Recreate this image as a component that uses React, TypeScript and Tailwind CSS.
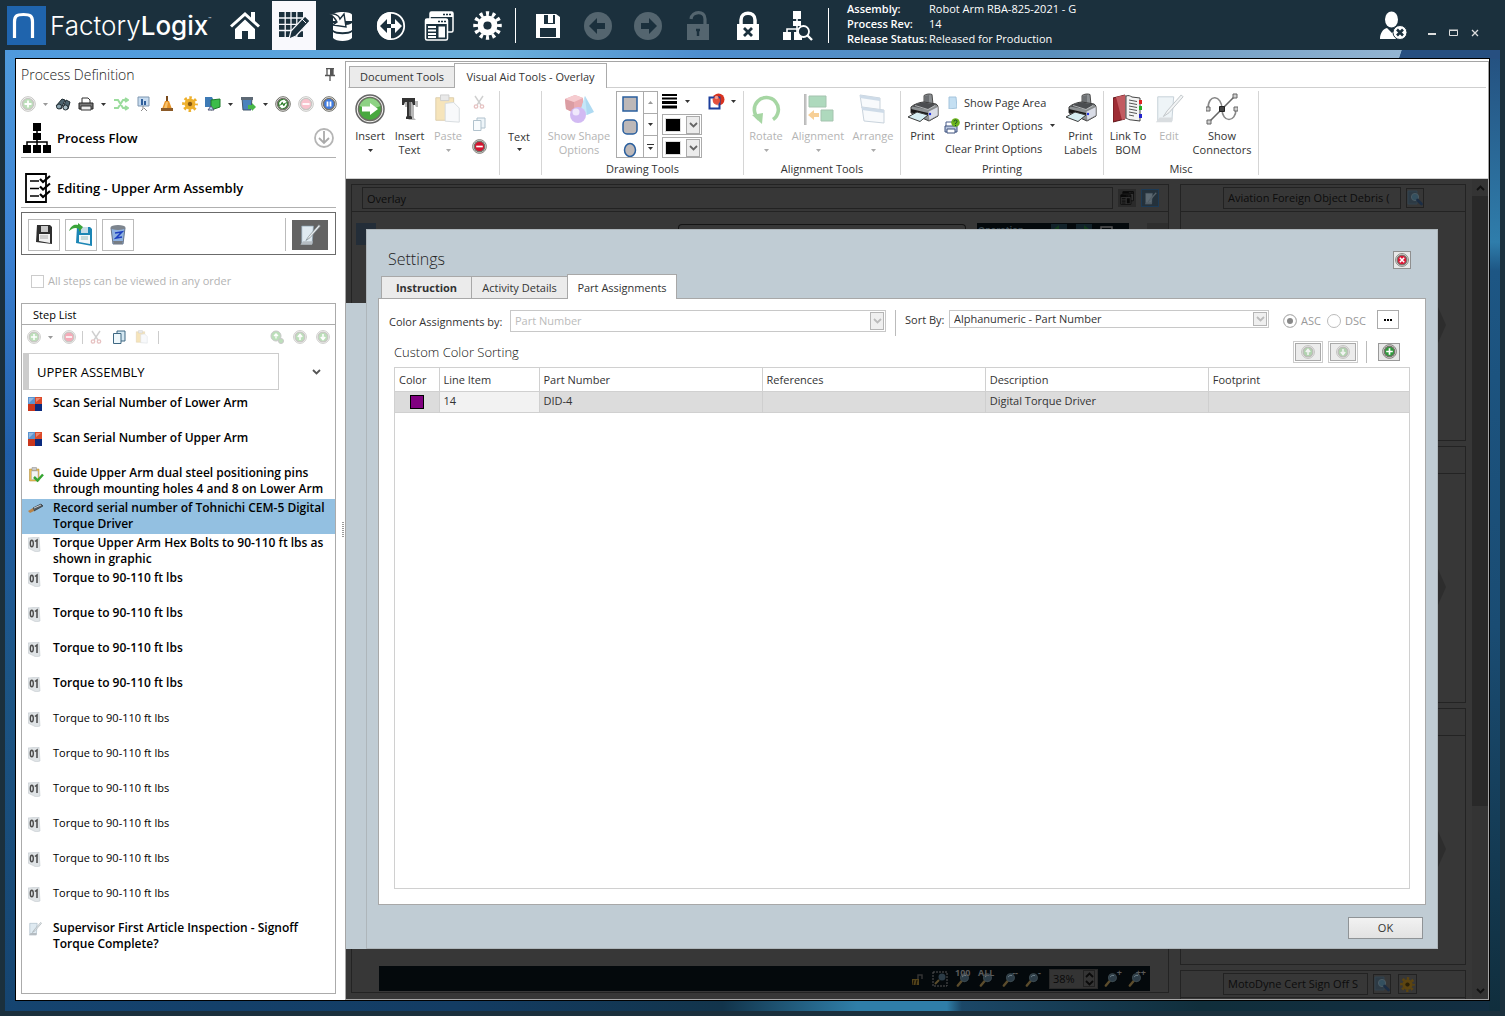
import React, { type ReactNode } from "react";

type P = { children?: ReactNode; className?: string };

/* ---------- shared little drawings ---------- */

function Svg({ s = 16, w, h, vb, children, className = "" }: { s?: number; w?: number; h?: number; vb?: string } & P) {
  return (
    <svg width={w ?? s} height={h ?? s} viewBox={vb ?? `0 0 ${w ?? s} ${h ?? s}`} className={"block shrink-0 " + className} aria-hidden="true">
      {children}
    </svg>
  );
}

const Caret = ({ className = "text-[#333]" }: P) => (
  <Svg w={5} h={3} className={className}>
    <path d="M0 0h5L2.5 3z" fill="currentColor" />
  </Svg>
);

const Chevron = ({ className = "" }: P) => (
  <Svg w={9} h={6} className={className}>
    <path d="M1 1l3.500 3.500L8 1" fill="none" stroke="currentColor" strokeWidth="1.800" />
  </Svg>
);

const signs: Record<string, string> = {
  plus: "M8 4.500v7M4.500 8h7",
  minus: "M4.500 8h7",
  up: "M8 11.500V5.500M5.500 8L8 5.200 10.500 8",
  down: "M8 4.500v6M5.500 8L8 10.800 10.500 8",
  pause: "M6.500 5.500v5M9.500 5.500v5",
  cross: "M5.500 5.500l5 5M10.500 5.500l-5 5",
  refresh: "M5 8.500A3 3 0 0 1 9.500 5.400M11 7.500A3 3 0 0 1 6.500 10.600M8.300 4l2 1.700-2.300 1.200M7.700 12l-2-1.700 2.300-1.200",
};

function Disc({ sign, fill, dim, s = 16 }: { sign: string; fill: string; dim?: boolean; s?: number }) {
  return (
    <Svg s={s} vb="0 0 16 16" className={dim ? "opacity-40" : ""}>
      <circle cx="8" cy="8" r="7.300" fill="#fff" stroke="#6d6d66" strokeWidth="1" />
      <circle cx="8" cy="8" r="5.600" fill={fill} stroke="#77736c" strokeWidth="1.400" />
      <path d={signs[sign]} fill="none" stroke="#fff" strokeWidth="1.800" />
    </Svg>
  );
}

const Scissors = () => (
  <Svg s={14} className="opacity-40">
    <path d="M3 1l6 9M11 1L5 10" stroke="#8a8a8a" strokeWidth="1.400" fill="none" />
    <circle cx="4" cy="11.500" r="1.700" fill="none" stroke="#c46a6a" strokeWidth="1.300" />
    <circle cx="10" cy="11.500" r="1.700" fill="none" stroke="#c46a6a" strokeWidth="1.300" />
  </Svg>
);

const Copy = ({ className = "" }: P) => (
  <Svg s={14} className={className}>
    <path d="M5 1h8v10H5z" fill="#d5e8f2" stroke="#3e6883" />
    <path d="M1.500 3.500h7.500v10H1.500z" fill="#eef7fb" stroke="#3e6883" />
  </Svg>
);

const Clipboard = ({ s = 14, check }: { s?: number; check?: boolean }) => (
  <Svg s={s} vb="0 0 32 32" className={check ? "" : "opacity-40"}>
    <path d="M3 4h19v24H3z" fill="#e9bd55" stroke="#a98430" />
    <path d="M8 1h9v6H8z" fill="#c9c9c9" stroke="#888" />
    {check ? <path d="M7 8h13v17H7z" fill="#f2f4f4" stroke="#aaa" /> : <path d="M13 10l9-1 6 6v15l-15-1z" fill="#eef2f6" stroke="#9aa6b0" />}
    {check && <path d="M12 20l7 7L30 15" fill="none" stroke="#35a531" strokeWidth="5" />}
  </Svg>
);

const Printer = ({ s = 32 }: { s?: number }) => (
  <Svg s={s} vb="0 0 32 32">
    <path d="M17 2.500c2-1.500 6-2 8-1l1 10-9 1z" fill="#8c9093" stroke="#4c4c4c" />
    <path d="M18 3l4-1v9l-4 .5z" fill="#6d7073" />
    <path d="M4 14c3-3 10-5 13-5l12 2c2 1 2 3 2 5v7l-9 5-18-8z" fill="#8d9193" stroke="#3b3b3b" />
    <path d="M5 13.500c3-2 9-4 12-4l12 2-8 5z" fill="#4b4d50" />
    <path d="M8 12.500l13 4 7-4" fill="none" stroke="#c9cccd" strokeWidth=".8" />
    <path d="M21 18.500l10-5v9l-9 5z" fill="#d9dce6" stroke="#777" strokeWidth=".6" />
    <path d="M4 16l17 4v3L4 19.500z" fill="#191919" />
    <path d="M1 24l9-5 11 3-8 6.500z" fill="#d6eef3" stroke="#3b3b3b" />
    <circle cx="23" cy="21" r="1.200" fill="#2233dd" />
  </Svg>
);

const NotePencil = ({ s = 32, className = "" }: { s?: number } & P) => (
  <Svg s={s} vb="0 0 32 32" className={className}>
    <path d="M4 3h17l-2 26H4z" fill="#dfeaf1" stroke="#8ba1b0" />
    <path d="M2 30l4-5h14l-1 5z" fill="#b5bcc2" />
    <path d="M29 1l2 2-15 17-6 4 4-6z" fill="#e8ecee" stroke="#7f8a90" />
  </Svg>
);

const Mag = ({ s = 16 }: { s?: number }) => (
  <Svg s={s} vb="0 0 16 16">
    <path d="M6.500 9L2 14.500" stroke="#5b4c2c" strokeWidth="2.600" strokeLinecap="round" />
    <circle cx="9" cy="6" r="4.200" fill="#2c3c47" stroke="#38464d" strokeWidth="1.200" />
    <path d="M6.800 5.500a2.500 2 0 0 1 4-1.500" stroke="#71848e" fill="none" />
  </Svg>
);

const Find = () => (
  <Svg s={16}>
    <path d="M1 1h9v13H1z" fill="#2d3a44" stroke="#33424e" />
    <circle cx="8" cy="7" r="3.600" fill="#34505f" stroke="#4b5a62" />
    <path d="M10.500 10l4 4" stroke="#1b2d44" strokeWidth="2.600" strokeLinecap="round" />
  </Svg>
);

const Gear = ({ s = 16, fill = "#eeb02c", hole = "#fff", teeth = 8 }: { s?: number; fill?: string; hole?: string; teeth?: number }) => (
  <Svg s={s} vb="0 0 32 32">
    <circle cx="16" cy="16" r="7.500" fill="none" stroke={fill} strokeWidth="7" />
    <circle cx="16" cy="16" r="13" fill="none" stroke={fill} strokeWidth="5.500" pathLength={teeth * 2} strokeDasharray="1 1" strokeDashoffset=".5" />
    <circle cx="16" cy="16" r="4.500" fill={hole} />
  </Svg>
);

const Windows = ({ s = 30, fg = "#fff", bg = "#1b303d" }: { s?: number; fg?: string; bg?: string }) => (
  <Svg s={s} vb="0 0 30 30">
    <rect x="6" y="1" width="23" height="20" rx="1.500" fill={bg} stroke={fg} strokeWidth="1.500" />
    <path d="M6 1h23v5H6z" fill={fg} />
    <path d="M19 3.500h8" stroke={bg} strokeWidth="1.500" strokeDasharray="2 1" />
    <rect x="1.500" y="8" width="22" height="21" rx="1.500" fill={bg} stroke={fg} strokeWidth="1.500" />
    <path d="M1.500 8h22v5h-22z" fill={fg} />
    <path d="M14 10.500h8" stroke={bg} strokeWidth="1.500" strokeDasharray="2 1" />
    <path d="M4 16h8M4 19.500h8M4 23h8M4 26h8" stroke={fg} strokeWidth="1.800" />
    <rect x="14.500" y="15.500" width="6.500" height="11" fill={fg} />
  </Svg>
);

/* ---------- title bar ---------- */

function NavButton({ label, children, active }: { label: string; children: ReactNode; active?: boolean }) {
  return (
    <button aria-label={label} className={"flex w-11 items-center justify-center self-stretch " + (active ? "bg-[#f9f9fd]" : "")}>
      {children}
    </button>
  );
}

const ArrowDisc = ({ left }: { left?: boolean }) => (
  <Svg s={30}>
    <circle cx="15" cy="15" r="14" fill="#54656f" />
    <path d={left ? "M6 15l8-8v5h8v6h-8v5z" : "M24 15l-8-8v5H8v6h8v5z"} fill="#1b303d" />
  </Svg>
);

function TitleBar() {
  return (
    <header className="flex h-[50px] shrink-0 items-stretch bg-[#1b303d] pt-px text-white">
      <div className="ml-[7px] mr-[8px] flex w-[208px] items-center gap-[4px]">
        <Svg s={39}>
          <path d="M0 0h39v39H0z" fill="#1f64ad" />
          <path d="M7.500 32V16C7.500 10 9.500 8.500 16.500 8.500S25.500 10 25.500 16V32" fill="none" stroke="#fff" strokeWidth="3.200" />
        </Svg>
        <div className="flex items-start whitespace-nowrap font-['Inter',sans-serif] text-[26px] font-light leading-[30px]">
          Factory<span className="font-medium">Logix</span>
          <span className="text-[5px] leading-[16px]">™</span>
        </div>
      </div>
      <nav className="flex w-[287px] shrink-0 justify-between">
        <NavButton label="Home">
          <Svg s={30}>
            <path d="M15 1L0 14.500l2 2L15 5l13 11.500 2-2-5-4.500V1h-4v5.500z" fill="#fff" />
            <path d="M5 18L15 8.500 25 18v10h-7v-8h-6v8H5z" fill="#fff" />
          </Svg>
        </NavButton>
        <NavButton label="Definition" active>
          <Svg s={30}>
            <path d="M0 1h24v25H0z" fill="#1b303d" />
            <path d="M6.200 0v26M12 0v26M17.800 0v26M0 7h25M0 13.300h25M0 19.500h25" stroke="#f9f9fd" strokeWidth="1.300" />
            <path d="M26 5l5 5-14 15-7 3 2-8z" fill="#1b303d" stroke="#f9f9fd" strokeWidth="1.200" />
            <path d="M23 8l4 4" stroke="#f9f9fd" />
          </Svg>
        </NavButton>
        <NavButton label="Data">
          <Svg w={26} h={30}>
            <path d="M4 4c0-4 19-4 19 0v6H4z" fill="#fff" />
            <path d="M4 12c3 3 16 3 19 0v7c-3 3-16 3-19 0zM4 21c3 3 16 3 19 0v6c-3 4-16 4-19 0z" fill="#fff" />
            <path d="M0 3c5-1 10 1 11 5l4-5 2 13-13-2 4-3C6 7 4 5 0 3z" fill="#fff" stroke="#1b303d" strokeWidth="1.400" />
          </Svg>
        </NavButton>
        <NavButton label="Transfer">
          <Svg s={30}>
            <circle cx="15" cy="15" r="13.200" fill="none" stroke="#fff" strokeWidth="1.800" />
            <path d="M15 1a14 14 0 0 0 0 28z" fill="#fff" />
            <path d="M4 15l7-7v5h4v4h-4v5z" fill="#1b303d" />
            <path d="M26 15l-7-7v5h-4v4h4v5z" fill="#fff" />
          </Svg>
        </NavButton>
        <NavButton label="Windows">
          <Windows />
        </NavButton>
        <NavButton label="Settings">
          <Gear s={29} fill="#fff" hole="#1b303d" teeth={12} />
        </NavButton>
      </nav>
      <div className="my-[7px] ml-[5px] mr-[6px] w-px bg-white" />
      <div className="flex gap-[6px] pl-[4px]">
        <NavButton label="Save">
          <Svg s={26}>
            <path d="M1 1h20l4 3v21H1z" fill="#fff" />
            <path d="M6 2h14v9H6z" fill="#1b303d" />
            <path d="M13 2h5v8h-5zM6 2h3v9H6z" fill="#fff" />
            <path d="M5 15h16v9H5z" fill="#1b303d" />
          </Svg>
        </NavButton>
        <NavButton label="Back">
          <ArrowDisc left />
        </NavButton>
        <NavButton label="Forward">
          <ArrowDisc />
        </NavButton>
        <NavButton label="Unlock">
          <Svg w={24} h={30}>
            <path d="M5 8c1-8 14-9 14 0v6" fill="none" stroke="#54656f" strokeWidth="3.200" />
            <path d="M1 13h22v16H1z" fill="#54656f" />
            <path d="M12 18v7M10 19h4" stroke="#1b303d" strokeWidth="2.400" />
          </Svg>
        </NavButton>
        <NavButton label="Lock">
          <Svg w={24} h={30}>
            <path d="M5 14V9c0-9 14-9 14 0v5" fill="none" stroke="#fff" strokeWidth="3.500" />
            <path d="M1 13h22v16H1z" fill="#fff" />
            <path d="M8 17l8 8M16 17l-8 8" stroke="#1b303d" strokeWidth="2.800" />
          </Svg>
        </NavButton>
        <NavButton label="Find in hierarchy">
          <Svg w={30} h={31}>
            <path d="M10 1h8v8h-8zM10 11h8v5h-8zM0 22h8v8H0zM11 22h8v8h-8z" fill="#fff" />
            <path d="M14 8v14M4 23v-4h14" stroke="#fff" strokeWidth="1.600" fill="none" />
            <circle cx="20.500" cy="21.500" r="5.500" fill="#1b303d" stroke="#fff" strokeWidth="1.800" />
            <path d="M24 25l5 5" stroke="#fff" strokeWidth="2.400" />
          </Svg>
        </NavButton>
      </div>
      <div className="mx-[8px] my-[7px] w-px bg-white" />
      <dl className="ml-[10px] grid grid-cols-[82px_auto] content-start text-[11px] leading-[15px]">
        <dt className="font-semibold">Assembly:</dt>
        <dd>Robot Arm RBA-825-2021 - G</dd>
        <dt className="font-semibold">Process Rev:</dt>
        <dd>14</dd>
        <dt className="whitespace-nowrap font-semibold">Release Status:</dt>
        <dd>Released for Production</dd>
      </dl>
      <div className="ml-auto flex items-center gap-[13px] pr-[26px]">
        <button aria-label="Log out" className="pr-[7px]">
          <Svg w={28} h={29}>
            <ellipse cx="11.500" cy="8.500" rx="6.500" ry="8" fill="#fff" />
            <path d="M0 28c0-6 3-10 7-11l5 5 4-5c4 1 6 5 6 11z" fill="#fff" />
            <circle cx="20" cy="21.500" r="7" fill="#fff" stroke="#1b303d" />
            <path d="M17 18.500l6 6M23 18.500l-6 6" stroke="#1b303d" strokeWidth="2.600" />
          </Svg>
        </button>
        <button aria-label="Minimize" className="pt-[24px]">
          <Svg w={8} h={9}>
            <path d="M0 0h8v2H0z" fill="#ddd" />
          </Svg>
        </button>
        <button aria-label="Maximize" className="pt-[14px]">
          <Svg w={9} h={7}>
            <path d="M.5 1.500h8v5h-8zM0 1h9" fill="none" stroke="#ddd" />
          </Svg>
        </button>
        <button aria-label="Close" className="pt-[14px]">
          <Svg s={8}>
            <path d="M1 1l6 6M7 1L1 7" stroke="#ddd" strokeWidth="1.300" />
          </Svg>
        </button>
      </div>
    </header>
  );
}

/* ---------- left panel ---------- */

const toolRow: ReactNode[] = [
  <Disc key="a" sign="plus" fill="#5ab055" dim />,
  <Caret key="b" className="text-[#999]" />,
  <Svg key="c">
    <path d="M1 10l6-7 3 1-4 9zM8 12l3-8 4 2-2 7z" fill="#4d6470" stroke="#1f2b31" />
    <circle cx="4" cy="10.500" r="2.500" fill="#8da5b1" stroke="#1f2b31" />
    <circle cx="10.500" cy="11.500" r="2.500" fill="#a9bcc5" stroke="#1f2b31" />
  </Svg>,
  <Svg key="d">
    <path d="M4 2h6l2 2v4H4z" fill="#fff" stroke="#333" />
    <path d="M1 7h14v6H1z" fill="#777" stroke="#222" />
    <path d="M3 10h10v4H3z" fill="#eee" stroke="#333" />
  </Svg>,
  <Caret key="e" />,
  <Svg key="f">
    <path d="M1 4h4l5 8h4M1 12h4l5-8h4M12 2l3 2-3 2M12 10l3 2-3 2" fill="none" stroke="#9bdc9d" strokeWidth="2" />
  </Svg>,
  <Svg key="g">
    <path d="M2 1h11v9H2z" fill="#c8dcf0" stroke="#7f97b0" />
    <path d="M5 3h2v6H5zM8 5h2v4H8z" fill="#31609c" />
    <path d="M7 10v3l-2 2M8 12l3 3" stroke="#888" fill="none" />
  </Svg>,
  <Svg key="h">
    <path d="M7 0h2v5H7z" fill="#7a4a1c" />
    <path d="M6 5h4l3 8H3z" fill="#e8952a" />
    <path d="M7 6h2l-1 6H5z" fill="#f7c26c" />
    <path d="M2 12h12v3H2z" fill="#8c5b28" />
  </Svg>,
  <Gear key="i" hole="#8a5b10" />,
  <Svg key="j">
    <path d="M0 1h7l1 2v8H0z" fill="#3d7ab5" />
    <path d="M6 4l9-1v8l-9 3z" fill="#3bbd4a" stroke="#1f7a2b" />
    <path d="M3 14l3-4 3 4z" fill="#b5d6ef" stroke="#557" />
  </Svg>,
  <Caret key="k" />,
  <Svg key="l">
    <path d="M2 2h10l-1 12H3z" fill="#4a82bd" stroke="#41566b" />
    <path d="M1 1h12v3H1z" fill="#5d6975" />
    <path d="M8 9h4V7l4 4-4 4v-2H8z" fill="#49b749" />
  </Svg>,
  <Caret key="m" />,
  <Disc key="n" sign="refresh" fill="#2e7f2b" />,
  <Disc key="o" sign="minus" fill="#ef6b84" dim />,
  <Disc key="p" sign="pause" fill="#3f7be0" />,
];

type Step = { text: string; bold?: boolean; icon: "scan" | "clip" | "tool" | "num" | "sign"; selected?: boolean };

const steps: Step[] = [
  { text: "Scan Serial Number of Lower Arm", bold: true, icon: "scan" },
  { text: "Scan Serial Number of Upper Arm", bold: true, icon: "scan" },
  { text: "Guide Upper Arm dual steel positioning pins through mounting holes 4 and 8 on Lower Arm", bold: true, icon: "clip" },
  { text: "Record serial number of Tohnichi CEM-5 Digital Torque Driver", bold: true, icon: "tool", selected: true },
  { text: "Torque Upper Arm Hex Bolts to 90-110 ft lbs as shown in graphic", bold: true, icon: "num" },
  ...Array.from({ length: 4 }, (): Step => ({ text: "Torque to 90-110 ft lbs", bold: true, icon: "num" })),
  ...Array.from({ length: 6 }, (): Step => ({ text: "Torque to 90-110 ft lbs", icon: "num" })),
  { text: "Supervisor First Article Inspection - Signoff Torque Complete?", bold: true, icon: "sign" },
];

function StepIcon({ kind }: { kind: Step["icon"] }) {
  if (kind === "scan")
    return (
      <Svg s={14}>
        <path d="M0 0h7v7H0z" fill="#5b93cf" />
        <path d="M7 0h7v7H7z" fill="#dc4a2a" />
        <path d="M0 7h7v7H0z" fill="#c9361d" />
        <path d="M7 7h7v7H7z" fill="#0b2a7e" />
        <path d="M1 1l5 0-5 5zM8 1h5L8 5z" fill="#fff" opacity=".35" />
      </Svg>
    );
  if (kind === "clip") return <Clipboard s={16} check />;
  if (kind === "tool")
    return (
      <Svg s={15}>
        <path d="M5 6l8-4 2 2-9 5z" fill="#555b60" stroke="#2f3336" strokeWidth=".7" />
        <path d="M0 9l5-3 1 3-4 2z" fill="#b98448" />
        <path d="M6 6l7-3" stroke="#c8cdd0" />
      </Svg>
    );
  if (kind === "sign") return <NotePencil s={14} />;
  return (
    <Svg w={13} h={15}>
      <path d="M0 1l11-1 1 14-4 1L0 11z" fill="#dfe3e6" stroke="#c3c9ce" strokeWidth=".6" />
      <ellipse cx="3.800" cy="6.500" rx="1.500" ry="3.200" fill="none" stroke="#4a4a4a" strokeWidth="1.400" />
      <path d="M7 4.500L9 3v8" fill="none" stroke="#4a4a4a" strokeWidth="1.500" />
    </Svg>
  );
}

function ProcessPanel() {
  return (
    <aside className="flex w-[320px] shrink-0 flex-col pl-[5px] text-black">
      <div className="flex h-[32px] items-center justify-between pb-[2px]">
        <h1 className="text-[14px] font-light text-[#222]">Process Definition</h1>
        <button aria-label="Pin panel">
          <Svg w={12} h={13}>
            <path d="M2 .5h8M3 1v6M9 1v6M1 7.500h10M6 8v5" fill="none" stroke="#555" strokeWidth="1.300" />
            <path d="M6 1h3v6H6z" fill="#555" />
          </Svg>
        </button>
      </div>
      <div className="-ml-px flex h-[26px] items-center gap-[7px]">{toolRow}</div>
      <div className="flex h-[41px] items-center gap-[6px] border-b border-[#b0b0b0] pl-[2px] pr-[2px] pt-[2px]">
        <Svg w={28} h={30}>
          <path d="M10 0h8v8h-8zM10 10h8v7h-8zM0 22h8v8H0zM10 22h8v8h-8zM20 22h8v8h-8z" />
          <path d="M14 8v14M4 22v-3h20v3" fill="none" stroke="#000" strokeWidth="1.500" />
        </Svg>
        <h2 className="flex-1 pt-px text-[13px] font-semibold">Process Flow</h2>
        <button aria-label="Expand process flow">
          <Svg s={20}>
            <circle cx="10" cy="10" r="9" fill="none" stroke="#b5b5b5" strokeWidth="1.800" />
            <path d="M10 3v12M5 10l5 5 5-5" fill="none" stroke="#aaa" strokeWidth="1.800" />
          </Svg>
        </button>
      </div>
      <div className="flex h-[50px] items-center gap-[5px] border-b border-[#b0b0b0] pl-[4px] pt-[11px]">
        <Svg w={27} h={30}>
          <path d="M1 1h20v28H1z" fill="#fff" stroke="#000" strokeWidth="1.800" />
          <path d="M5 8h9M5 15.500h9M5 23h9" stroke="#000" strokeWidth="1.500" />
          <path d="M15 6l3 3 7-6M15 13.500l3 3 7-6M15 21l3 3 7-6" fill="none" stroke="#000" strokeWidth="2.200" />
        </Svg>
        <h2 className="pt-px text-[13px] font-semibold">Editing - Upper Arm Assembly</h2>
      </div>
      <div className="mt-[4px] flex h-[43px] shrink-0 items-center gap-[5px] border border-[#6b6b6b] pl-[6px] pr-[7px] pt-[2px]">
        <button aria-label="Save step" className="flex h-8 w-8 items-center justify-center border border-[#bbb]">
          <Svg s={22}>
            <path d="M4 1h13l2 2v17L3 18z" fill="#2e2e2e" />
            <path d="M8 2h7v6H8z" fill="#c8c8c8" />
            <path d="M6 10h11v9L6 17z" fill="#f1f1f1" />
            <path d="M7 12h8M7 14h8" stroke="#aaa" />
          </Svg>
        </button>
        <button aria-label="Save and return" className="flex h-8 w-8 items-center justify-center border border-[#bbb]">
          <Svg s={24}>
            <path d="M8 4h13l2 2v17L7 20z" fill="#1c86b5" />
            <path d="M12 4h7v6h-7z" fill="#c7dce6" />
            <path d="M10 12h11v9l-11-2z" fill="#f3f8fa" />
            <path d="M12 14h7M12 16h7" stroke="#9bb" />
            <path d="M0 8c2-6 6-7 9-6V0l5 4-4 5V6C6 4 4 5 0 8z" fill="#3aa53a" />
          </Svg>
        </button>
        <button aria-label="Delete step" className="flex h-8 w-8 items-center justify-center border border-[#bbb]">
          <Svg s={22}>
            <path d="M4 4h14l-2 16H6z" fill="#8fb2e0" stroke="#66758a" />
            <ellipse cx="11" cy="3.500" rx="7.500" ry="2.500" fill="#7d858e" />
            <path d="M8 9l7-1-6 6 6-1" fill="none" stroke="#1b3ec0" strokeWidth="1.600" />
            <path d="M6 17h10l-1 3H7z" fill="#777d84" />
          </Svg>
        </button>
        <div className="ml-auto mr-px h-[33px] w-px bg-[#bbb]" />
        <button aria-label="Edit step" className="flex h-[30px] w-9 items-center justify-center bg-[#636363]">
          <NotePencil s={22} />
        </button>
      </div>
      <label className="flex h-[48px] items-center gap-[4px] pl-[10px] pt-[4px] text-[11px] text-[#b3b3b3]">
        <input type="checkbox" disabled className="h-[13px] w-[13px] appearance-none border border-[#ccc] bg-white" />
        All steps can be viewed in any order
      </label>
      <section className="mb-[6px] flex flex-1 flex-col border border-[#ababab]">
        <h3 className="h-[21px] border-b border-[#ababab] pl-[11px] text-[11px] leading-[21px]">Step List</h3>
        <div className="flex h-[24px] items-center pl-[5px] pr-[5px]">
          <Disc sign="plus" fill="#5ab055" dim s={14} />
          <Caret className="ml-[7px] mr-[9px] text-[#999]" />
          <Disc sign="minus" fill="#e8304f" dim s={14} />
          <div className="mx-[6px] h-[13px] w-px bg-[#ccc]" />
          <div className="flex flex-1 items-center gap-[9px]">
            <Scissors />
            <Copy />
            <Clipboard />
            <div className="h-[13px] w-px bg-[#ccc]" />
          </div>
          <div className="flex gap-[9px]">
            <Svg s={14} className="opacity-40">
              <circle cx="6" cy="6" r="5" fill="#5ab055" stroke="#777" />
              <circle cx="11" cy="11" r="2.500" fill="#5ab055" stroke="#777" />
              <path d="M6 8.500V4M4 6l2-2 2 2" stroke="#fff" strokeWidth="1.300" fill="none" />
            </Svg>
            <Disc sign="up" fill="#5ab055" dim s={14} />
            <Disc sign="down" fill="#5ab055" dim s={14} />
          </div>
        </div>
        <div className="mt-[4px] flex items-center justify-between pl-px pr-[14px]">
          <input
            aria-label="Step group"
            defaultValue="UPPER ASSEMBLY"
            className="h-[37px] w-[256px] border border-l-[6px] border-[#ccc] bg-white pl-[8px] text-[13px] outline-none"
          />
          <button aria-label="Collapse group">
            <Chevron className="text-[#555]" />
          </button>
        </div>
        <ul className="mt-[4px] leading-[16px]">
          {steps.map((s, i) => (
            <li
              key={i}
              className={
                "flex min-h-[35px] gap-[9px] pl-[6px] pr-[4px] pt-px " +
                (s.selected ? "bg-[#93c0e1] " : "") +
                (s.bold ? "text-[12px] font-semibold" : "text-[11px]")
              }
            >
              <span className="flex w-[16px] shrink-0 pt-[2px]">
                <StepIcon kind={s.icon} />
              </span>
              <span>{s.text}</span>
            </li>
          ))}
        </ul>
      </section>
    </aside>
  );
}

/* ---------- ribbon ---------- */

function Group({ label, className = "", children }: { label?: string } & P) {
  return (
    <div className={"mt-[3px] flex h-[84px] shrink-0 flex-col border-r border-[#d5d5d5] " + className}>
      <div className="flex h-[70px] items-start">{children}</div>
      <div className="h-[14px] text-center leading-[15px]">{label}</div>
    </div>
  );
}

function Big({ icon, lines, caret, dim, className = "" }: { icon?: ReactNode; lines: string[]; caret?: boolean; dim?: boolean } & P) {
  return (
    <button className={"flex shrink-0 flex-col items-center whitespace-nowrap pt-[2px] leading-[14px] " + (dim ? "text-[#b4b4b4] " : "") + className}>
      <span className="mb-[4px] flex h-[32px] items-center">{icon}</span>
      {lines.map((l) => (
        <span key={l}>{l}</span>
      ))}
      {caret && <Caret className={dim ? "mt-[6px] text-[#aaa]" : "mt-[6px]"} />}
    </button>
  );
}

const Cube = () => (
  <Svg s={32} className="opacity-50">
    <path d="M2 6l10-4 8 3v11l-9 4-8-4z" fill="#d65a66" />
    <path d="M2 6l9 3v11l-8-4z" fill="#b83d4a" />
    <path d="M2 6l10-4 8 3-9 4z" fill="#ee9aa2" />
    <path d="M22 3l9 16-7 3-7-3z" fill="#5fb6e6" />
    <path d="M22 3l2 19-7-3z" fill="#8ed0f2" />
    <circle cx="15" cy="22" r="8" fill="#a678e8" />
    <circle cx="13" cy="19" r="3.500" fill="#e2d3fb" />
  </Svg>
);

function Ribbon() {
  return (
    <div className="mx-[2px] flex h-[91px] shrink-0 border-t border-[#cfcfcf] pl-[2px] text-[11px] text-[#333]">
      <Group className="w-[150px]">
        <Big
          className="w-[40px]"
          lines={["Insert"]}
          caret
          icon={
            <Svg s={30}>
              <circle cx="15" cy="15" r="14" fill="#f3f3f0" stroke="#666" strokeWidth="1.500" />
              <circle cx="15" cy="15" r="11.500" fill="#48a83f" stroke="#6e6e66" strokeWidth="1.500" />
              <path d="M4.500 12a11 11 0 0 1 21 0c-6 3-15 3-21 0z" fill="#8ed284" />
              <path d="M7 12.500h8V9l8 6-8 6v-3.500H7z" fill="#fff" />
            </Svg>
          }
        />
        <Big
          className="w-[39px]"
          lines={["Insert", "Text"]}
          icon={
            <Svg w={18} h={24}>
              <path d="M4 4h13v6h-2l-1-2h-1v13l2 2H7l2-2V8L6 10H4z" fill="#b8b8b8" />
              <path d="M1 1h13v7h-2l-1-3h-1v14l1 1v2H5v-2l1-1V5H4L3 8H1z" fill="#333" />
              <path d="M8 5h2v14H8z" fill="#777" />
            </Svg>
          }
        />
        <Big className="w-[38px]" lines={["Paste"]} caret dim icon={<Clipboard s={30} />} />
        <div className="flex w-[24px] flex-col items-center gap-[8px] pt-[4px]">
          <Scissors />
          <Copy className="opacity-40" />
          <Disc sign="minus" fill="#d5122d" s={15} />
        </div>
      </Group>
      <Group className="w-[42px]">
        <button className="flex w-[38px] flex-col items-center pt-[39px] leading-[14px]">
          Text
          <Caret className="mt-[4px]" />
        </button>
      </Group>
      <Group className="w-[202px]" label="Drawing Tools">
        <Big className="w-[74px]" lines={["Show Shape", "Options"]} dim icon={<Cube />} />
        <div className="grid h-[67px] w-[42px] grid-cols-[26px_14px] overflow-hidden border border-[#ababab]">
          <div className="flex flex-col items-center gap-[7px] pr-px pt-[4px]">
            <Svg s={16}>
              <path d="M1 1h14v14H1z" fill="#bdb8b8" stroke="#2a5f9e" strokeWidth="1.500" />
            </Svg>
            <Svg s={16}>
              <rect x="1" y="1" width="14" height="14" rx="4" fill="#bdb8b8" stroke="#2a5f9e" strokeWidth="1.500" />
            </Svg>
            <Svg s={16}>
              <ellipse cx="8" cy="8" rx="5.500" ry="6.500" fill="#bdb8b8" stroke="#2a5f9e" strokeWidth="1.500" />
            </Svg>
          </div>
          <div className="grid grid-rows-3 divide-y divide-[#ababab] border-l border-[#ababab]">
            <button aria-label="Previous shapes" className="flex items-center justify-center">
              <Caret className="rotate-180 text-[#999]" />
            </button>
            <button aria-label="Next shapes" className="flex items-center justify-center">
              <Caret />
            </button>
            <button aria-label="All shapes" className="flex flex-col items-center justify-center gap-[2px]">
              <span className="h-px w-[7px] bg-[#333]" />
              <Caret />
            </button>
          </div>
        </div>
        <div className="ml-[4px] flex flex-col gap-[2px]">
          <button aria-label="Line weight" className="flex h-[21px] items-center gap-[8px]">
            <Svg s={15}>
              <path d="M0 1h15M0 4.500h15" stroke="#000" strokeWidth="2" />
              <path d="M0 8.500h15M0 13h15" stroke="#000" strokeWidth="3" />
            </Svg>
            <Caret />
          </button>
          {["Line color", "Fill color"].map((n) => (
            <button key={n} aria-label={n} className="flex h-[21px] w-[40px] items-center justify-between border border-[#ababab] pl-[2px] pr-px">
              <span className="h-[14px] w-[16px] border border-[#ddd] bg-black" />
              <span className="flex h-[18px] w-[14px] items-center justify-center border border-[#ababab] bg-[#ececec]">
                <Chevron className="text-[#666]" />
              </span>
            </button>
          ))}
        </div>
        <button aria-label="Shape order" className="ml-[6px] flex h-[21px] items-center gap-[6px]">
          <Svg s={17}>
            <circle cx="10.500" cy="6.500" r="6" fill="#d8321f" />
            <path d="M1.500 4.500h10v11h-10z" fill="#fff" fillOpacity=".35" stroke="#1c3e9c" strokeWidth="2" />
            <circle cx="8.500" cy="7.500" r="3.500" fill="#e4503c" />
            <circle cx="8.500" cy="4.500" r="1.800" fill="#f49a8c" />
          </Svg>
          <Caret />
        </button>
      </Group>
      <Group className="w-[157px]" label="Alignment Tools">
        <Big
          className="w-[44px]"
          lines={["Rotate"]}
          caret
          dim
          icon={
            <Svg s={30} className="opacity-50">
              <path d="M8 25A12 12 0 1 1 22 25.500" fill="none" stroke="#4fae4a" strokeWidth="3.600" />
              <path d="M1 21l11-2-1 11z" fill="#4fae4a" />
            </Svg>
          }
        />
        <Big
          className="w-[60px]"
          lines={["Alignment"]}
          caret
          dim
          icon={
            <Svg s={31} className="opacity-50">
              <path d="M1.500 0h1.500v31H1.500z" fill="#999" stroke="#777" />
              <path d="M6 2h17v11H6zM18 16h12v11H18z" fill="#5fb57d" stroke="#4e8a62" />
              <path d="M5 21l6-5v3h5v4h-5v3z" fill="#f0a030" />
            </Svg>
          }
        />
        <Big
          className="w-[50px]"
          lines={["Arrange"]}
          caret
          dim
          icon={
            <Svg s={30} className="opacity-40">
              <path d="M2 1l20 3v13L4 14z" fill="#eef3f8" stroke="#7a93aa" />
              <path d="M2 1l20 3v3L2 4z" fill="#86a8c7" />
              <path d="M4 13l22 3v13L6 27z" fill="#eef3f8" stroke="#7a93aa" />
              <path d="M4 13l22 3v3L4 16z" fill="#86a8c7" />
            </Svg>
          }
        />
      </Group>
      <Group className="w-[203px]" label="Printing">
        <Big className="w-[43px]" lines={["Print"]} icon={<Printer />} />
        <div className="flex w-[114px] flex-col whitespace-nowrap leading-[23px]">
          <button className="flex items-center gap-[7px] pl-[4px]">
            <Svg w={9} h={13}>
              <path d="M1 1h7l1 11-8 1z" fill="#c4dff2" stroke="#a4c4dc" />
            </Svg>
            Show Page Area
          </button>
          <button className="flex items-center gap-[4px]">
            <Svg s={16}>
              <path d="M2 4h7v9H2z" fill="#fff" stroke="#4a5e8c" />
              <path d="M1 8h12v6H1z" fill="#b9c6df" stroke="#3f527e" />
              <path d="M3 11h8v4H3z" fill="#fff" stroke="#3f527e" />
              <circle cx="11.500" cy="4.500" r="4.300" fill="#6bb31b" />
              <path d="M10 3.500c0-2 3-2 3 0 0 1-1.500 1-1.500 2.500M11.500 7v1" stroke="#143" fill="none" />
            </Svg>
            Printer Options
            <Caret className="ml-[3px]" />
          </button>
          <button className="pl-px text-left">Clear Print Options</button>
        </div>
        <Big className="w-[45px]" lines={["Print", "Labels"]} icon={<Printer />} />
      </Group>
      <Group className="w-[155px]" label="Misc">
        <Big
          className="w-[48px]"
          lines={["Link To", "BOM"]}
          icon={
            <Svg s={30}>
              <path d="M0 4l12-3v24L0 28z" fill="#9e2c34" stroke="#5e1419" />
              <path d="M3 3l9-2v24l-3 1z" fill="#c25a60" />
              <path d="M13 2c3-1 4 0 6 1l8 1v23l-8-1c-3 0-4-1-6-2z" fill="#f4f4f4" stroke="#444" />
              <path d="M16 6l8 1.500M16 9l8 1.500M16 12l8 1.500M16 15l8 1.500M16 18l8 1.500M16 21l5 1" stroke="#555" />
              <path d="M26 6h3v4h-3z" fill="#d22" />
              <path d="M26 12h3v4h-3z" fill="#2a2" />
              <path d="M26 20h3v4h-3z" fill="#22c" />
            </Svg>
          }
        />
        <Big className="w-[34px]" lines={["Edit"]} dim icon={<NotePencil s={30} className="opacity-50" />} />
        <Big
          className="w-[72px]"
          lines={["Show", "Connectors"]}
          icon={
            <Svg s={32}>
              <path d="M2 16C2 0 16 2 16 16s14 14 14 0" fill="none" stroke="#888" strokeWidth="1.600" />
              <path d="M3 29L29 3" stroke="#666" strokeWidth="1.600" />
              <path d="M27 1h4v4h-4zM0 14h4v4H0zM28 14h4v4h-4zM1 27h4v4H1z" fill="#d0d0d0" stroke="#666" />
              <path d="M13.500 13.500h5v5h-5z" fill="#444" stroke="#222" />
            </Svg>
          }
        />
      </Group>
    </div>
  );
}

/* ---------- dimmed workspace behind the dialog ---------- */

const sidePanels = ["Aviation Foreign Object Debris (", "", "", "MotoDyne Cert Sign Off S"];

function Workspace() {
  return (
    <div className="absolute inset-0 flex overflow-hidden bg-[#373737] text-[11px] text-[#0c0c0c]">
      <section className="mb-[6px] ml-[5px] mt-[5px] flex flex-1 flex-col border border-[#232323]">
        <div className="flex h-[27px] items-center gap-[5px] border-b border-[#232323] pl-[10px] pr-[9px]">
          <input aria-label="Page name" defaultValue="Overlay" className="h-[22px] min-w-0 flex-1 border border-[#222] bg-transparent px-[4px] text-[11px] outline-none" />
          <span className="flex h-[18px] w-[18px] items-center justify-center bg-[#2a2a2a]">
            <Windows s={14} fg="#090909" bg="#333" />
          </span>
          <span className="flex h-[18px] w-[18px] items-center justify-center border border-[#1c3a55] bg-[#24313b]">
            <NotePencil s={13} className="opacity-30" />
          </span>
        </div>
        <div className="flex flex-1 items-start pt-[11px]">
          <div className="ml-[4px] h-[22px] w-[20px] bg-[#232d38]" />
          <div className="ml-[302px] mt-[1px] h-[10px] w-[288px] rounded-t border border-b-0 border-[#151515]" />
          <div className="ml-auto flex h-[16px] w-[152px] items-start justify-between bg-[#04090c] pl-px pr-[14px] text-[9px] font-bold text-[#3c4a52]">
            Operation
            <Svg w={64} h={9}>
              <path d="M0 1h16v9H0zM25 1h16v9H25z" fill="#12222a" />
              <path d="M3 6l5-4v8zM38 6l-5-4v8z" fill="#133a1b" />
              <path d="M50 4h11v4H50z" fill="none" stroke="#555" strokeWidth="1.500" />
            </Svg>
          </div>
          <div className="ml-[18px] h-[20px] w-[21px] bg-[#2e2e2e]" />
        </div>
        <div className="mb-px ml-[27px] mr-[18px] flex h-[25px] items-center justify-end gap-[6px] bg-[#04090c] pr-[4px] text-[9px] font-bold leading-[9px] text-[#5a5a5a]">
          <Svg s={16}>
            <path d="M3 8h7v6H3z" fill="#54441b" />
            <path d="M4 14l1-5M7 14l1-5" stroke="#1a1408" strokeWidth="1.200" />
            <path d="M9 8V4h4v4" stroke="#333" strokeWidth="1.500" fill="none" />
          </Svg>
          <Svg s={18}>
            <path d="M2 2h14v14H2z" fill="none" stroke="#555" strokeDasharray="2 1" />
            <circle cx="11" cy="7" r="3.500" fill="#2c3c47" />
            <path d="M8 10l-4 4" stroke="#5b4c2c" strokeWidth="2" />
          </Svg>
          {["100", "ALL", "--", "-"].map((t) => (
            <span key={t} className="relative flex h-[20px] w-[17px] items-end justify-center pb-[2px]">
              <Mag s={15} />
              <span className={"absolute -top-px " + (t[0] === "-" ? "right-0" : "left-0")}>{t}</span>
            </span>
          ))}
          <span className="ml-[2px] flex h-[20px] w-[49px] items-center justify-between border border-[#292929] bg-[#343434] pl-[3px] pr-[2px] text-[11px] font-normal text-[#0a0a0a]">
            38%
            <span className="flex h-[17px] w-[12px] flex-col items-center justify-center gap-[2px] border border-[#222]">
              <Chevron className="rotate-180" />
              <Chevron />
            </span>
          </span>
          {["+", "++"].map((t) => (
            <span key={t} className="relative flex h-[20px] w-[18px] items-end pb-[2px]">
              <Mag s={15} />
              <span className="absolute -top-px right-0">{t}</span>
            </span>
          ))}
        </div>
      </section>
      <div className="ml-[11px] mr-[6px] mt-[5px] flex w-[286px] flex-col gap-[5px]">
        {sidePanels.map((t, i) => (
          <section key={i} className="relative h-[257px] shrink-0 border border-[#232323]">
            <div className="flex h-[27px] items-center gap-[5px] border-b border-[#232323] pl-[42px]">
              {t && (
                <>
                  <span className={"h-[22px] whitespace-nowrap border border-[#222] px-[4px] text-[11px] leading-[20px] " + (i ? "w-[145px]" : "w-[178px]")}>{t}</span>
                  <span className="flex h-[20px] w-[18px] items-center justify-center border border-[#222]">
                    <Find />
                  </span>
                  {i > 0 && (
                    <span className="ml-[2px] flex h-[20px] w-[19px] items-center justify-center border border-[#222]">
                      <Gear s={15} fill="#5d4510" hole="#2b2006" />
                    </span>
                  )}
                </>
              )}
            </div>
            <Svg w={16} h={36} className="absolute right-[19px] top-[122px]">
              <path d="M8 0l8 18-8 18z" fill="#2d2d2d" />
            </Svg>
          </section>
        ))}
      </div>
      <div className="flex w-[16px] flex-col items-center bg-[#343434]">
        <Chevron className="mb-[5px] mt-[6px] rotate-180 text-[#111]" />
        <div className="h-[610px] w-full bg-[#292929]" />
        <Chevron className="mb-[5px] mt-auto text-[#111]" />
      </div>
    </div>
  );
}

/* ---------- settings dialog ---------- */

function Select({ id, value, disabled, className = "" }: { id: string; value: string; disabled?: boolean } & P) {
  return (
    <div className={"relative " + className}>
      <select
        id={id}
        disabled={disabled}
        className="h-full w-full appearance-none border border-[#c8c8c8] bg-white px-[4px] text-[11px] text-[#333] outline-none disabled:text-[#bbb] disabled:opacity-100"
      >
        <option>{value}</option>
      </select>
      <span className="pointer-events-none absolute bottom-[2px] right-[2px] top-[2px] flex w-[14px] items-center justify-center border border-[#b5b5b5] bg-[#efefef] text-[#bbb]">
        <Chevron />
      </span>
    </div>
  );
}

function SettingsDialog() {
  return (
    <div role="dialog" aria-label="Settings" className="absolute bottom-[50px] left-[20px] right-[50px] top-[50px] flex flex-col border border-[#aeb6bb] bg-[#c0ccd4] text-[11px] text-[#333]">
      <div className="flex h-[44px] items-start justify-between pl-[21px] pr-[26px] pt-[18px]">
        <h2 className="text-[16px] font-light leading-[22px] text-[#222]">Settings</h2>
        <button aria-label="Close dialog" className="mt-[3px] flex h-[18px] w-[18px] items-center justify-center border border-[#8f8f8f] bg-[#e8e8e8]">
          <Disc sign="cross" fill="#dc1636" s={14} />
        </button>
      </div>
      <div role="tablist" className="relative z-10 -mb-px ml-[14px] flex items-end leading-[20px]">
        <button role="tab" className="h-[23px] w-[91px] border border-[#a8a8a8] bg-[#ebebeb] font-bold">
          Instruction
        </button>
        <button role="tab" className="-ml-px h-[23px] w-[97px] border border-[#a8a8a8] bg-[#ebebeb]">
          Activity Details
        </button>
        <button role="tab" aria-selected="true" className="-ml-px h-[25px] w-[110px] whitespace-nowrap border border-b-0 border-[#a8a8a8] bg-white pt-[2px]">
          Part Assignments
        </button>
      </div>
      <div className="mx-[11px] flex flex-1 flex-col border border-[#a8a8a8] bg-white pb-[15px] pl-[15px] pr-[15px] pt-[11px]">
        <div className="-ml-[5px] flex items-start">
          <label htmlFor="color-by" className="mr-[3px] mt-[3px] w-[118px] shrink-0 whitespace-nowrap leading-[18px]">
            Color Assignments by:
          </label>
          <Select id="color-by" value="Part Number" disabled className="h-[22px] flex-1" />
          <div className="mx-[9px] h-[26px] w-px bg-[#bbb]" />
          <label htmlFor="sort-by" className="w-[44px] shrink-0 whitespace-nowrap leading-[19px]">
            Sort By:
          </label>
          <Select id="sort-by" value="Alphanumeric - Part Number" className="h-[18px] w-[320px]" />
          <div className="ml-[14px] mt-[4px] flex items-center gap-[4px] text-[#999]">
            {["ASC", "DSC"].map((t, i) => (
              <label key={t} className="flex w-[40px] items-center gap-[4px] leading-[14px]">
                <input
                  type="radio"
                  name="order"
                  disabled
                  defaultChecked={i === 0}
                  className="h-[14px] w-[14px] appearance-none rounded-full border border-[#bbb] bg-white checked:bg-[#888] checked:shadow-[inset_0_0_0_3px_#fff]"
                />
                {t}
              </label>
            ))}
          </div>
          <button aria-label="More sort options" className="ml-[10px] mr-[11px] flex h-[19px] w-[22px] items-center justify-center gap-px border border-[#aaa]">
            <span className="h-[2px] w-[2px] bg-black" />
            <span className="h-[2px] w-[2px] bg-black" />
            <span className="h-[2px] w-[2px] bg-black" />
          </button>
        </div>
        <div className="flex h-[31px] items-center pr-[10px]">
          <h3 className="flex-1 pt-[3px] text-[13px] font-light text-[#111]">Custom Color Sorting</h3>
          {["up", "down"].map((d) => (
            <button key={d} disabled aria-label={"Move " + d} className="mr-[5px] h-[22px] w-[30px] border border-[#ccc] p-px">
              <span className="flex h-full items-center justify-center border border-[#aaa] bg-[#ececec]">
                <Disc sign={d} fill="#5ab055" dim s={14} />
              </span>
            </button>
          ))}
          <div className="ml-[3px] mr-[11px] h-[22px] w-px bg-[#bbb]" />
          <button aria-label="Add row" className="flex h-[18px] w-[22px] items-center justify-center border border-[#999] bg-[#e8e8e8]">
            <Disc sign="plus" fill="#2f9a3c" s={15} />
          </button>
        </div>
        <div className="flex-1 border border-[#d0d0d0]">
          <table className="w-full table-fixed border-collapse text-left">
            <colgroup>
              <col className="w-[44px]" />
              <col className="w-[100px]" />
              <col className="w-[22%]" />
              <col className="w-[22%]" />
              <col className="w-[22%]" />
              <col />
            </colgroup>
            <thead>
              <tr className="h-[23px] border-b border-[#d0d0d0]">
                {["Color", "Line Item", "Part Number", "References", "Description", "Footprint"].map((h) => (
                  <th key={h} className="border-r border-[#d0d0d0] px-[4px] pt-px font-normal last:border-r-0">
                    {h}
                  </th>
                ))}
              </tr>
            </thead>
            <tbody>
              <tr className="h-[21px] border-b border-[#d0d0d0] bg-[#dcdcdc]">
                <td className="border-r border-[#cfcfcf]">
                  <span className="mx-auto block h-[14px] w-[14px] border border-black bg-[#800080]" />
                </td>
                <td className="border-r border-[#d0d0d0] bg-[#f2f2f2] px-[4px]">14</td>
                <td className="border-r border-[#cfcfcf] px-[4px]">DID-4</td>
                <td className="border-r border-[#cfcfcf]" />
                <td className="border-r border-[#cfcfcf] px-[4px]">Digital Torque Driver</td>
                <td />
              </tr>
            </tbody>
          </table>
        </div>
      </div>
      <div className="flex h-[43px] shrink-0 items-start justify-end pr-[14px] pt-[12px]">
        <button className="h-[22px] w-[75px] border border-[#8f9396] bg-linear-to-b from-[#f2f2f2] to-[#e2e2e2]">OK</button>
      </div>
    </div>
  );
}

/* ---------- page ---------- */

const Wallpaper = () => (
  <svg className="absolute inset-0 h-full w-full" viewBox="0 0 1495 961" preserveAspectRatio="none" aria-hidden="true">
    <defs>
      <linearGradient id="wt">
        <stop offset="0" stopColor="#4f99dc" />
        <stop offset=".15" stopColor="#559fdd" />
        <stop offset=".35" stopColor="#6bb0dc" />
        <stop offset=".5" stopColor="#4d8dce" />
        <stop offset=".75" stopColor="#5b90bd" />
        <stop offset="1" stopColor="#94b5d2" />
      </linearGradient>
      <linearGradient id="wl" x2="0" y2="1">
        <stop offset="0" stopColor="#4f9bdc" />
        <stop offset=".2" stopColor="#3c82d3" />
        <stop offset=".42" stopColor="#205ea8" />
        <stop offset=".65" stopColor="#1c5585" />
        <stop offset="1" stopColor="#154470" />
      </linearGradient>
      <linearGradient id="wr" x2="0" y2="1">
        <stop offset="0" stopColor="#24507f" />
        <stop offset=".2" stopColor="#2f7dab" />
        <stop offset=".23" stopColor="#1d5684" />
        <stop offset=".6" stopColor="#1a4c73" />
        <stop offset="1" stopColor="#102e3d" />
      </linearGradient>
      <linearGradient id="wb">
        <stop offset="0" stopColor="#154470" />
        <stop offset=".3" stopColor="#133c63" />
        <stop offset=".48" stopColor="#12344b" />
        <stop offset=".57" stopColor="#2f7ea8" />
        <stop offset=".63" stopColor="#2f7ea8" />
        <stop offset=".64" stopColor="#1b4767" />
        <stop offset=".8" stopColor="#102e3b" />
        <stop offset="1" stopColor="#122e42" />
      </linearGradient>
    </defs>
    <path d="M0 0h1495v961H0z" fill="#154470" />
    <path d="M0 949h1495v12H0z" fill="url(#wb)" />
    <path d="M0 0h12v961H0z" fill="url(#wl)" />
    <path d="M1484 0h11v961h-11z" fill="url(#wr)" />
    <path d="M0 0h1397l-3 9H0z" fill="url(#wt)" />
    <path d="M1397 0h98v9h-101z" fill="#274f80" />
  </svg>
);

export default function App() {
  return (
    <div className="flex h-screen min-h-[700px] flex-col bg-[#1b303d] font-['Open_Sans',sans-serif]">
      <TitleBar />
      <div className="relative mb-[5px] ml-[5px] mr-[5px] flex min-h-0 flex-1 pb-[10px] pl-[10px] pr-[10px] pt-[8px]">
        <Wallpaper />
        <main className="relative flex min-w-0 flex-1 border border-black bg-white">
          <ProcessPanel />
          <div className="flex w-[9px] shrink-0 items-center justify-end pr-px">
            <div className="h-[16px] w-[2px] bg-[repeating-linear-gradient(#999_0_1px,#fff_1px_2px)]" />
          </div>
          <div className="mt-[2px] flex min-w-0 flex-1 flex-col border border-[#a5a5a5]">
            <div role="tablist" className="relative z-10 -mb-px flex h-[26px] shrink-0 items-end pl-[3px] text-[11px] text-[#333]">
              <button role="tab" className="h-[22px] w-[106px] whitespace-nowrap border border-[#ababab] bg-[#ebebeb]">
                Document Tools
              </button>
              <button role="tab" aria-selected="true" className="-ml-px h-[25px] w-[153px] whitespace-nowrap border border-b-0 border-[#ababab] bg-white pt-[2px]">
                Visual Aid Tools - Overlay
              </button>
            </div>
            <Ribbon />
            <div className="relative min-h-0 flex-1 border-t border-[#d0d0d0]">
              <Workspace />
              <div className="absolute bottom-[50px] left-0 top-[124px] w-[21px] bg-[#c0ccd4]" />
              <SettingsDialog />
            </div>
          </div>
        </main>
      </div>
    </div>
  );
}
